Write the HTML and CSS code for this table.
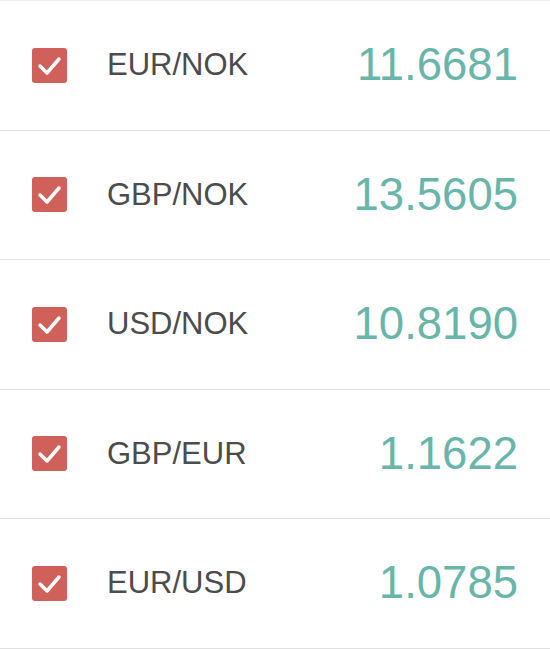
FILE: index.html
```html
<!DOCTYPE html>
<html>
<head>
<meta charset="utf-8">
<link rel="stylesheet" href="styles.css">
</head>
<body>
<ul class="rates">
  <li class="row">
    <span class="check"><svg viewBox="0 0 35 35" width="35" height="35"><polyline points="8,18 15,25 27,11"/></svg></span>
    <span class="pair">EUR/NOK</span>
    <span class="rate">11.6681</span>
  </li>
  <li class="row">
    <span class="check"><svg viewBox="0 0 35 35" width="35" height="35"><polyline points="8,18 15,25 27,11"/></svg></span>
    <span class="pair">GBP/NOK</span>
    <span class="rate">13.5605</span>
  </li>
  <li class="row">
    <span class="check"><svg viewBox="0 0 35 35" width="35" height="35"><polyline points="8,18 15,25 27,11"/></svg></span>
    <span class="pair">USD/NOK</span>
    <span class="rate">10.8190</span>
  </li>
  <li class="row">
    <span class="check"><svg viewBox="0 0 35 35" width="35" height="35"><polyline points="8,18 15,25 27,11"/></svg></span>
    <span class="pair">GBP/EUR</span>
    <span class="rate">1.1622</span>
  </li>
  <li class="row">
    <span class="check"><svg viewBox="0 0 35 35" width="35" height="35"><polyline points="8,18 15,25 27,11"/></svg></span>
    <span class="pair">EUR/USD</span>
    <span class="rate">1.0785</span>
  </li>
</ul>
</body>
</html>
```
FILE: styles.css
```css
html, body {
  margin: 0;
  padding: 0;
  background: #ffffff;
}
body {
  font-family: "Liberation Sans", Arial, sans-serif;
}
.rates {
  list-style: none;
  margin: 0;
  padding: 0;
  border-top: 1px solid #ececec;
}
.row {
  display: flex;
  align-items: center;
  box-sizing: border-box;
  height: 129.5px;
  padding: 0 32px;
  border-bottom: 1px solid #e2e2e2;
}
.check {
  flex: none;
  width: 35px;
  height: 35px;
  border-radius: 3px;
  background: #d0615a;
  display: flex;
}
.check polyline {
  fill: none;
  stroke: #ffffff;
  stroke-width: 3.5;
  stroke-linecap: round;
  stroke-linejoin: round;
}
.pair {
  margin-left: 40px;
  font-size: 31px;
  color: #4c4c4c;
}
.rate {
  margin-left: auto;
  font-size: 45.5px;
  color: #68b5aa;
}
```
